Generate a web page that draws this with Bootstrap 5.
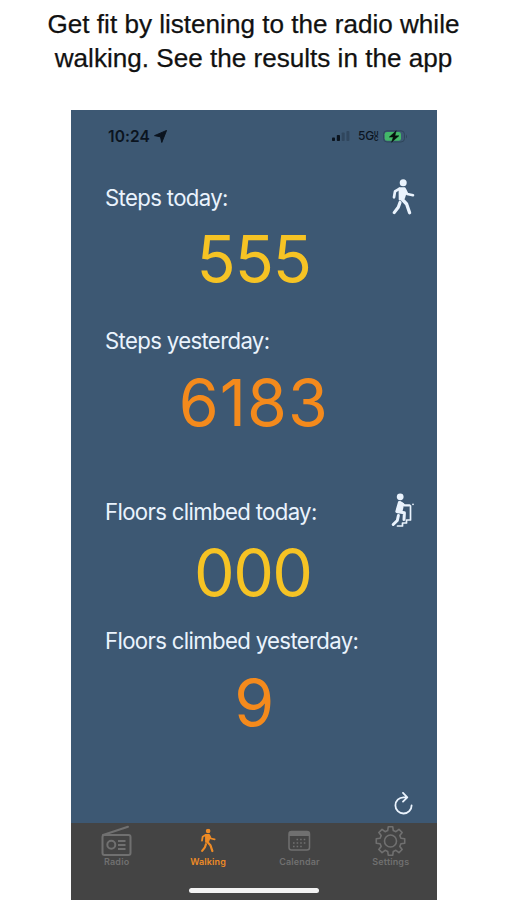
<!DOCTYPE html>
<html lang="en">
<head>
<meta charset="utf-8">
<meta name="viewport" content="width=device-width, initial-scale=1">
<title>Walking</title>
<link href="https://cdn.jsdelivr.net/npm/bootstrap@5.3.0/dist/css/bootstrap.min.css" rel="stylesheet">
<style>
body{background:#fff;font-family:Inter,"Liberation Sans",sans-serif;height:900px;overflow:hidden}
.headline{height:109.5px;padding-top:7px;font:400 26.1px/34px "Liberation Sans",Arial,sans-serif;color:#111;-webkit-text-stroke:.25px #111}
.headline span{white-space:nowrap}
.phone{width:365.5px;height:790.5px;margin-left:71px;background:#3d5873}
.status{height:67.5px;padding:0 29px 14px 37px;color:#0b141f}
.clock{font-size:15.5px;font-weight:600;letter-spacing:.1px}
.net{font-size:12px;font-weight:500;letter-spacing:-.2px}
.uc{font-size:6px;line-height:5.5px;font-weight:700}
.metric-name{height:40px;padding-left:34px;padding-right:22px;font-size:22.2px;line-height:39px;letter-spacing:-.66px;color:#eaf3fd;white-space:nowrap}
.figure-num{height:64px;margin-top:10px;font-size:64.5px;line-height:64px;font-weight:400;letter-spacing:-1px;text-align:center}
.figure-num.wide{letter-spacing:1px}
.figure-num.zeros{letter-spacing:-1.6px;padding-right:2px}
.yellow{color:#f6c324}.orange{color:#f48a1c}
.g1{margin-bottom:30px}.g2{margin-bottom:56px}.g3{margin-bottom:16px}
.tabs{height:77px;background:#444;color:#707070}
.tab-item{width:91.4px;font-size:9px;line-height:12px;font-weight:600;letter-spacing:.15px}
.tab-item svg{height:33px;display:block}
.tab-item.on{color:#ee8b26}
.home{width:130px;height:5px;background:#f3f3f3;margin:20px auto 0}
</style>
<script src="https://cdn.jsdelivr.net/npm/bootstrap@5.3.0/dist/js/bootstrap.bundle.min.js"></script>
</head>
<body>
<svg width="0" height="0" class="position-absolute">
  <symbol id="walker" viewBox="0 0 24 36">
    <g fill="none" stroke="currentColor" stroke-linecap="round" stroke-linejoin="round">
      <circle cx="12.2" cy="3.7" r="3.5" fill="currentColor" stroke="none"/>
      <path d="M8.6 9.3L13.6 9.3L14.6 14L13 19L8.7 20.5Z" fill="currentColor" stroke-width="2"/>
      <path d="M8.2 9.8L4 12.4L3 18.3" stroke-width="2.7"/>
      <path d="M14 10.5L16.2 15L22 16.2" stroke-width="2.6"/>
      <path d="M10.4 19.5L15.6 25L18.6 33.8" stroke-width="3.3"/>
      <path d="M9 23.5L7.3 28.2L3.2 33.6" stroke-width="3.2"/>
    </g>
  </symbol>
</svg>
<header class="headline text-center"><span>Get fit by listening to the radio while</span><br><span>walking. See the results in the app</span></header>
<main class="phone d-flex flex-column">
  <div class="status d-flex align-items-center justify-content-between">
    <div class="d-flex align-items-center clock">10:24
      <svg class="ms-1" width="13" height="13" viewBox="0 0 12 12"><path d="M11.6.4L7.2 11.5 6 6.3.5 5.2z" fill="currentColor" stroke="currentColor" stroke-width=".9" stroke-linejoin="round"/></svg>
    </div>
    <div class="d-flex align-items-center">
      <svg width="18" height="12" viewBox="0 0 18 12" fill="currentColor"><rect x="0" y="7.5" width="3" height="3.5" rx=".8"/><rect x="4.8" y="5" width="3.2" height="6" rx=".8"/><g opacity=".25"><rect x="9.7" y="2.5" width="3" height="8.5" rx=".8"/><rect x="14.4" y="1" width="3" height="10" rx=".8"/></g></svg>
      <span class="net ms-2">5G</span><span class="uc d-flex flex-column"><span>U</span><span>C</span></span>
      <svg class="ms-1" width="25" height="13" viewBox="0 0 25 13"><rect x=".5" y=".8" width="21" height="11.2" rx="3.5" fill="none" stroke="#2f465b"/><rect x="1.7" y="2" width="16.3" height="8.8" rx="2.3" fill="#43b868"/><path d="M23 4.5q2 2 0 4z" fill="#2f465b"/><path d="M13.2.8L6.3 7.1h4l-1.7 5.1 7.3-6.4h-4z" fill="#07110d" stroke="#07110d" stroke-width=".5"/></svg>
    </div>
  </div>
  <section class="g1">
    <div class="metric-name d-flex justify-content-between align-items-center"><span>Steps today:</span><svg width="24" height="36"><use href="#walker"/></svg></div>
    <div class="figure-num yellow">555</div>
  </section>
  <section class="g2">
    <div class="metric-name"><span>Steps yesterday:</span></div>
    <div class="figure-num wide orange">6183</div>
  </section>
  <section class="g3">
    <div class="metric-name d-flex justify-content-between align-items-center"><span>Floors climbed today:</span>
      <svg width="24" height="36" viewBox="0 0 24 36" fill="none" stroke="#eaf3fd" stroke-linecap="round" stroke-linejoin="round"><circle cx="9.2" cy="3.8" r="3.4" fill="#eaf3fd" stroke="none"/><path d="M8.2 9.2L12 11L10.5 17.5L5.5 18.5Z" fill="#eaf3fd" stroke-width="2.4"/><path d="M9.5 9.5L13.5 12.3H18.5" stroke-width="2.2"/><circle cx="22" cy="11.3" r=".9" fill="#eaf3fd" stroke="none"/><path d="M6.5 18.8L13.4 19.8L13 26.5" stroke-width="3"/><path d="M7.4 22.5L6.3 27.5L2.2 31.5" stroke-width="3"/><path d="M19.5 12.8V27H15.5V30H11.5V33H6.5" stroke-width="1.7"/></svg>
    </div>
    <div class="figure-num zeros yellow">000</div>
  </section>
  <section>
    <div class="metric-name"><span>Floors climbed yesterday:</span></div>
    <div class="figure-num orange">9</div>
  </section>
  <div class="mt-auto d-flex justify-content-end pe-4 pb-2">
    <svg width="19" height="23" viewBox="0 0 19 23" fill="none" stroke="#eaf3fd" stroke-width="1.8" stroke-linecap="round" stroke-linejoin="round"><path d="M12.7 5.3H9.5A8.1 8.1 0 1 0 17.6 13.3M9 .9l4.3 4.4L9 9.6"/></svg>
  </div>
  <nav class="tabs">
    <div class="d-flex text-center">
      <div class="tab-item"><svg class="mx-auto" width="31" height="33" viewBox="0 0 31 33" fill="none" stroke="currentColor" stroke-width="2"><rect x="1.5" y="12" width="28" height="20" rx="2"/><path d="M2 12L27 3.8" stroke-linecap="round"/><circle cx="10.3" cy="21.8" r="4"/><path d="M17 18h7.5M17 22h7.5M17 26h7.5"/></svg><span>Radio</span></div>
      <div class="tab-item on"><svg class="mx-auto" width="16" height="33"><use href="#walker" y="5.5" width="16" height="24"/></svg><span>Walking</span></div>
      <div class="tab-item"><svg class="mx-auto" width="23" height="33" viewBox="0 0 23 33"><rect x="1" y="8.5" width="20.5" height="18.5" rx="2.5" fill="none" stroke="currentColor" stroke-width="1.5"/><path d="M1 9h20v4H1z" fill="currentColor"/><path d="M8.5 16.5h10M5 20h13.5M5 23.5h10" stroke="currentColor" stroke-width="1.6" stroke-dasharray="1.6 2"/></svg><span>Calendar</span></div>
      <div class="tab-item"><svg class="mx-auto" width="31" height="33" viewBox="-15.5 -18 31 33" fill="none" stroke="currentColor" stroke-width="1.6" stroke-linejoin="round"><circle r="6"/><path id="gear"/></svg><span>Settings</span></div>
    </div>
    <div class="home rounded-pill"></div>
  </nav>
</main>
<script>
// Eight-tooth gear outline, tooth by tooth.
let d = "";
for (let i = 0; i < 8; i++) {
  for (const [a, r] of [[-15, 10.8], [-9, 14.4], [9, 14.4], [15, 10.8]]) {
    const t = (i * 45 + a) * Math.PI / 180;
    d += (d ? "L" : "M") + (r * Math.sin(t)).toFixed(2) + " " + (-r * Math.cos(t)).toFixed(2);
  }
}
document.getElementById("gear").setAttribute("d", d + "Z");
</script>
</body>
</html>
